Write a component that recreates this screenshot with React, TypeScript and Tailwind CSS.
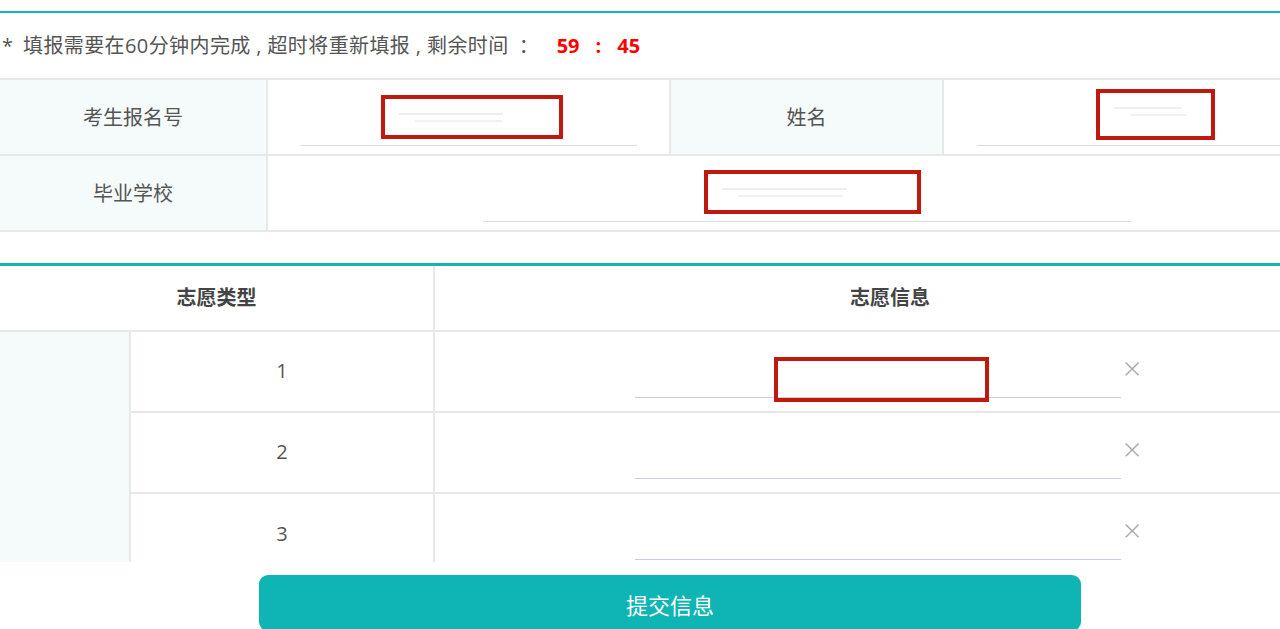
import React from 'react';

const font = { fontFamily: '"Open Sans", "Noto Sans CJK SC", sans-serif' };

const RedBox = ({ className }: { className: string }) => (
  <div className={`absolute border-[4px] border-[#c01a0e] pointer-events-none ${className}`}>
    <div className="mt-[14px] ml-[14px] w-[60%] h-[2px] bg-[#eceef2]" />
    <div className="mt-[5px] ml-[30px] w-[50%] h-[2px] bg-[#f0f1f4]" />
  </div>
);

const ChoiceRow = ({ n, last }: { n: number; last?: boolean }) => (
  <div className={`grid grid-cols-[304px_1fr] h-[81px] ${last ? '' : 'border-b-2 border-[#e8e8e8]'}`}>
    <div className="flex items-center justify-center border-r-2 border-[#e8e8e8] text-[20px] text-[#555] pb-[2px]">
      {n}
    </div>
    <div className="relative">
      <div className="absolute left-[200px] top-[65px] w-[486px] h-[1px] bg-[#c4d0e2]" />
      <span className="absolute left-[688px] top-[20px] text-[32px] font-light leading-none text-[#aaa]">×</span>
    </div>
  </div>
);

const App: React.FC = () => {
  return (
    <div className="w-[1280px] h-[629px] overflow-hidden bg-white relative" style={font}>
      <div className="pt-[11px]">
        <div className="h-[2px] bg-[#14b5b0]" />
        <div className="h-[65px] flex items-center pl-[2px] text-[20px] text-[#555] pt-[1px]">
          <span className="mr-[10px]">*</span>
          <span className="tracking-[0.4px]">填报需要在60分钟内完成 , 超时将重新填报 , 剩余时间</span>
          <span className="ml-[10px]">：</span>
          <span className="ml-[18px] font-bold text-[#f00] flex items-center">
            <span>59</span>
            <span className="mx-[16px]">:</span>
            <span>45</span>
          </span>
        </div>

        <div className="border-t-2 border-[#e8e8e8]">
          <div className="grid grid-cols-[268px_403px_273px_1fr] h-[76px] border-b-2 border-[#e8e8e8]">
            <div className="bg-[#f5fafa] border-r-2 border-[#e8e8e8] flex items-center justify-center text-[20px] text-[#555] pt-[2px]">
              考生报名号
            </div>
            <div className="relative border-r-2 border-[#e8e8e8]">
              <div className="absolute left-[33px] top-[65px] w-[336px] h-[1px] bg-[#d5dcea]" />
            </div>
            <div className="bg-[#f5fafa] border-r-2 border-[#e8e8e8] flex items-center justify-center text-[20px] text-[#555] pt-[2px]">
              姓名
            </div>
            <div className="relative">
              <div className="absolute left-[33px] top-[65px] right-0 h-[1px] bg-[#d5dcea]" />
            </div>
          </div>
          <div className="grid grid-cols-[268px_1fr] h-[76px] border-b-2 border-[#e8e8e8]">
            <div className="bg-[#f5fafa] border-r-2 border-[#e8e8e8] flex items-center justify-center text-[20px] text-[#555] pt-[2px]">
              毕业学校
            </div>
            <div className="relative">
              <div className="absolute left-[215px] top-[65px] w-[648px] h-[1px] bg-[#d5dcea]" />
            </div>
          </div>
        </div>

        <div className="mt-[31px] h-[3px] bg-[#14b5b0]" />
        <div className="h-[296px] overflow-hidden">
          <div className="grid grid-cols-[435px_1fr] h-[66px] border-b-2 border-[#e8e8e8] text-[20px] font-bold text-[#444]">
            <div className="flex items-center justify-center border-r-2 border-[#e8e8e8]">志愿类型</div>
            <div className="flex items-center pl-[415px]">志愿信息</div>
          </div>
          <div className="grid grid-cols-[131px_1fr] h-[300px]">
            <div className="bg-[#f5fafa] border-r-2 border-[#e8e8e8]" />
            <div>
              <ChoiceRow n={1} />
              <ChoiceRow n={2} />
              <ChoiceRow n={3} last />
            </div>
          </div>
        </div>

        <div className="pt-[13px] pl-[259px]">
          <button className="w-[822px] h-[56px] rounded-[9px] bg-[#0fb5b4] text-white text-[22px] pt-[4px]">
            提交信息
          </button>
        </div>
      </div>

      <RedBox className="left-[381px] top-[95px] w-[182px] h-[44px]" />
      <RedBox className="left-[1096px] top-[89px] w-[119px] h-[51px]" />
      <RedBox className="left-[704px] top-[170px] w-[217px] h-[44px]" />
      <div className="absolute left-[774px] top-[357px] w-[215px] h-[45px] border-[4px] border-[#c01a0e]" />
    </div>
  );
};

export default App;
